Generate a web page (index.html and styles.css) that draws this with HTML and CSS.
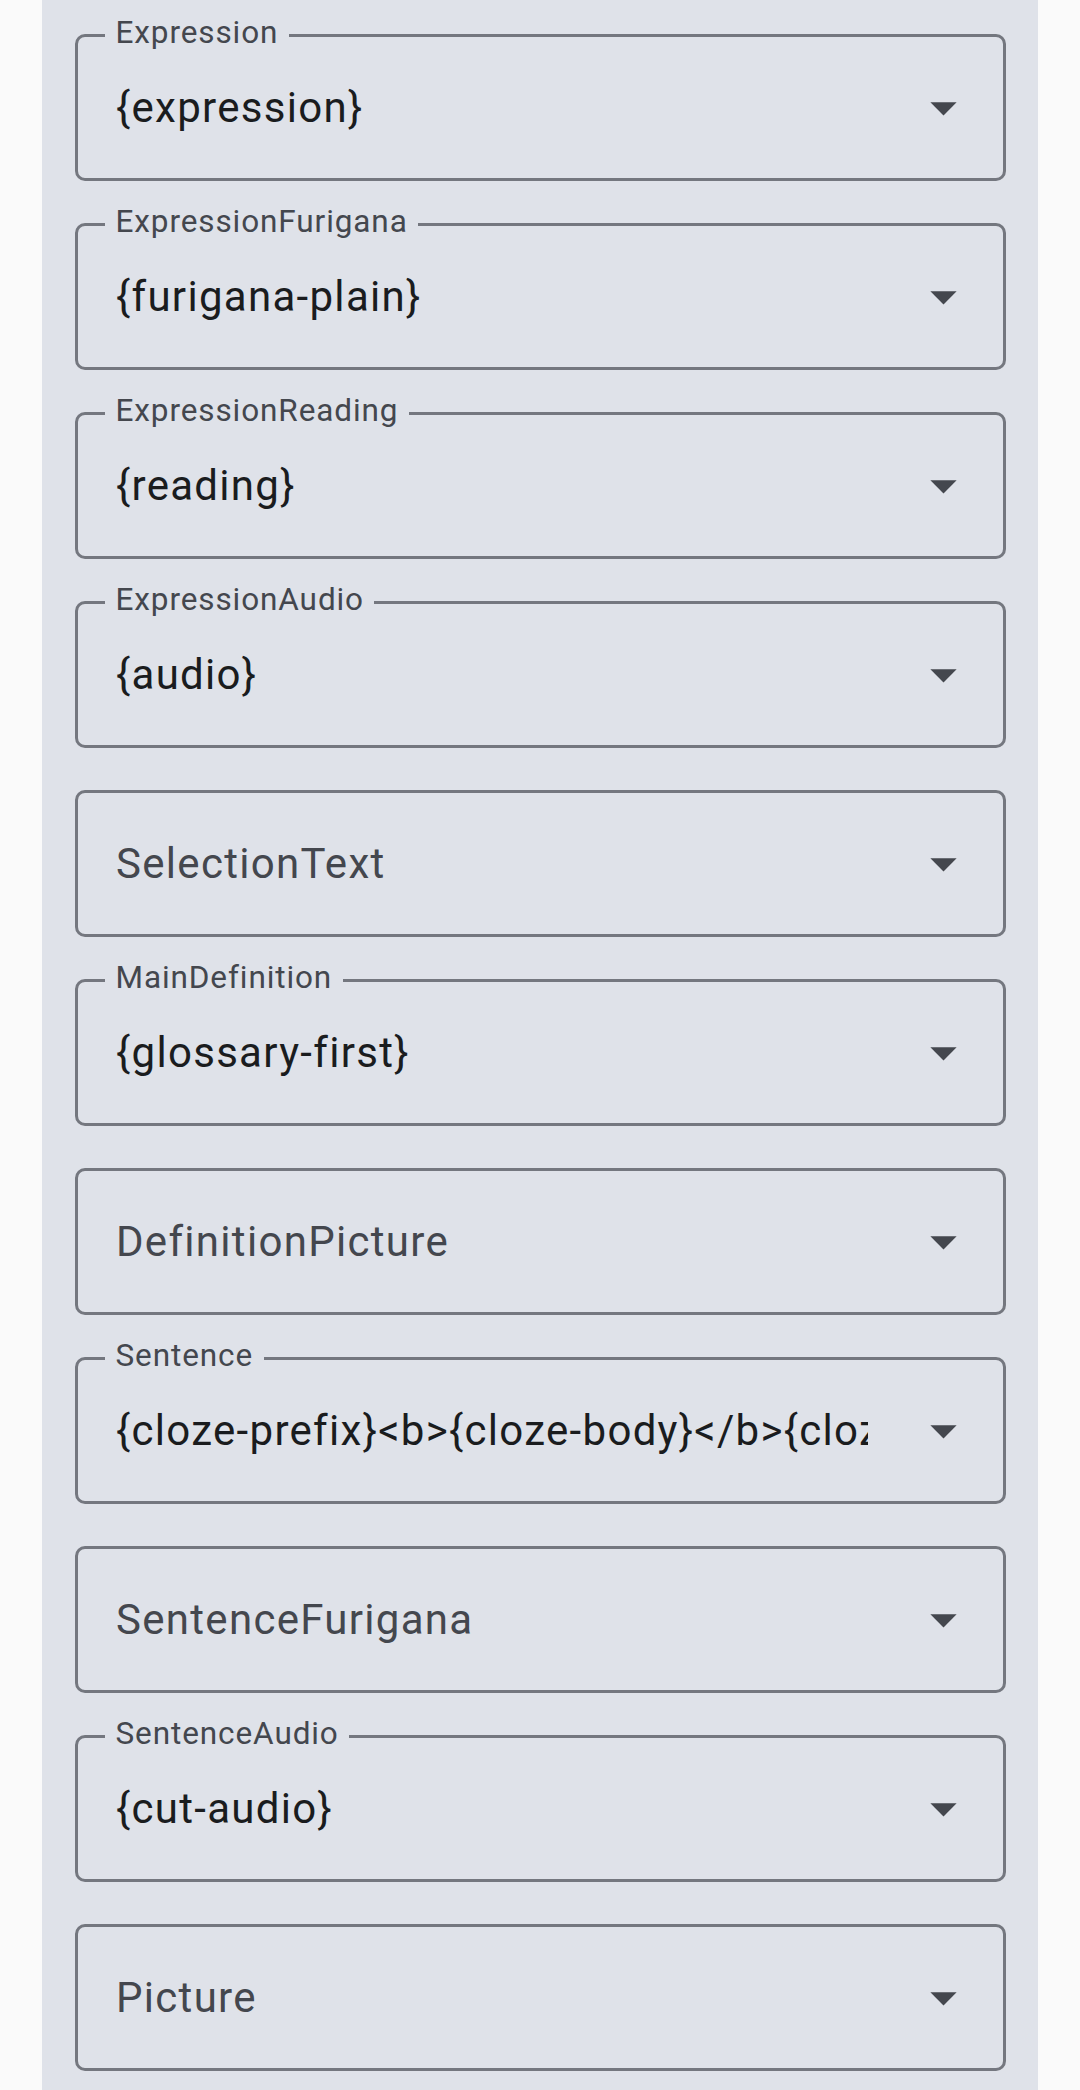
FILE: index.html
```html
<!DOCTYPE html>
<html lang="en">
<head>
<meta charset="utf-8">
<title>Fields</title>
<link rel="stylesheet" href="styles.css">
</head>
<body>
<main class="panel">
  <fieldset class="field">
    <legend class="field-label">Expression</legend>
    <div class="field-row">
      <span class="field-value">{expression}</span>
      <svg class="field-arrow" viewBox="0 0 24 24"><path d="M7 10l5 5 5-5z"/></svg>
    </div>
  </fieldset>
  <fieldset class="field">
    <legend class="field-label">ExpressionFurigana</legend>
    <div class="field-row">
      <span class="field-value">{furigana-plain}</span>
      <svg class="field-arrow" viewBox="0 0 24 24"><path d="M7 10l5 5 5-5z"/></svg>
    </div>
  </fieldset>
  <fieldset class="field">
    <legend class="field-label">ExpressionReading</legend>
    <div class="field-row">
      <span class="field-value">{reading}</span>
      <svg class="field-arrow" viewBox="0 0 24 24"><path d="M7 10l5 5 5-5z"/></svg>
    </div>
  </fieldset>
  <fieldset class="field">
    <legend class="field-label">ExpressionAudio</legend>
    <div class="field-row">
      <span class="field-value">{audio}</span>
      <svg class="field-arrow" viewBox="0 0 24 24"><path d="M7 10l5 5 5-5z"/></svg>
    </div>
  </fieldset>
  <fieldset class="field">
    <div class="field-row">
      <span class="field-value placeholder">SelectionText</span>
      <svg class="field-arrow" viewBox="0 0 24 24"><path d="M7 10l5 5 5-5z"/></svg>
    </div>
  </fieldset>
  <fieldset class="field">
    <legend class="field-label">MainDefinition</legend>
    <div class="field-row">
      <span class="field-value">{glossary-first}</span>
      <svg class="field-arrow" viewBox="0 0 24 24"><path d="M7 10l5 5 5-5z"/></svg>
    </div>
  </fieldset>
  <fieldset class="field">
    <div class="field-row">
      <span class="field-value placeholder">DefinitionPicture</span>
      <svg class="field-arrow" viewBox="0 0 24 24"><path d="M7 10l5 5 5-5z"/></svg>
    </div>
  </fieldset>
  <fieldset class="field">
    <legend class="field-label">Sentence</legend>
    <div class="field-row">
      <span class="field-value">{cloze-prefix}&lt;b&gt;{cloze-body}&lt;/b&gt;{cloze-suffix}</span>
      <svg class="field-arrow" viewBox="0 0 24 24"><path d="M7 10l5 5 5-5z"/></svg>
    </div>
  </fieldset>
  <fieldset class="field">
    <div class="field-row">
      <span class="field-value placeholder">SentenceFurigana</span>
      <svg class="field-arrow" viewBox="0 0 24 24"><path d="M7 10l5 5 5-5z"/></svg>
    </div>
  </fieldset>
  <fieldset class="field">
    <legend class="field-label">SentenceAudio</legend>
    <div class="field-row">
      <span class="field-value">{cut-audio}</span>
      <svg class="field-arrow" viewBox="0 0 24 24"><path d="M7 10l5 5 5-5z"/></svg>
    </div>
  </fieldset>
  <fieldset class="field">
    <div class="field-row">
      <span class="field-value placeholder">Picture</span>
      <svg class="field-arrow" viewBox="0 0 24 24"><path d="M7 10l5 5 5-5z"/></svg>
    </div>
  </fieldset>
</main>
</body>
</html>
```

FILE: styles.css
```css
html, body {
  margin: 0;
  padding: 0;
  height: 100%;
  overflow: hidden;
  background: #fafafa;
}

body {
  font-family: Roboto, "Noto Sans", "Liberation Sans", sans-serif;
}

.panel {
  box-sizing: border-box;
  width: 996px;
  margin-left: 42px;
  padding: 34px 32.5px 60px;
  background: #dfe2e9;
  display: flex;
  flex-direction: column;
  gap: 42px;
}

.field {
  margin: 0;
  padding: 0;
  min-width: 0;
  border: 3px solid #74777f;
  border-radius: 10px;
}

.field-label {
  margin-left: 27.5px;
  padding: 0 10.5px;
  font-size: 31.5px;
  letter-spacing: 0.9px;
  line-height: 0;
  color: #44474e;
  transform: translateY(-3px);
}

.field-row {
  height: 141px;
  display: flex;
  align-items: center;
  padding-left: 38.5px;
  padding-right: 28px;
}

.field-value {
  flex: 1;
  min-width: 0;
  white-space: nowrap;
  overflow: hidden;
  font-size: 42px;
  letter-spacing: 1.3px;
  color: #1a1c1e;
}

.field-value.placeholder {
  color: #44474e;
}

.field-arrow {
  flex: none;
  width: 63px;
  height: 63px;
  margin-left: 43.5px;
  fill: #44474e;
}
```
